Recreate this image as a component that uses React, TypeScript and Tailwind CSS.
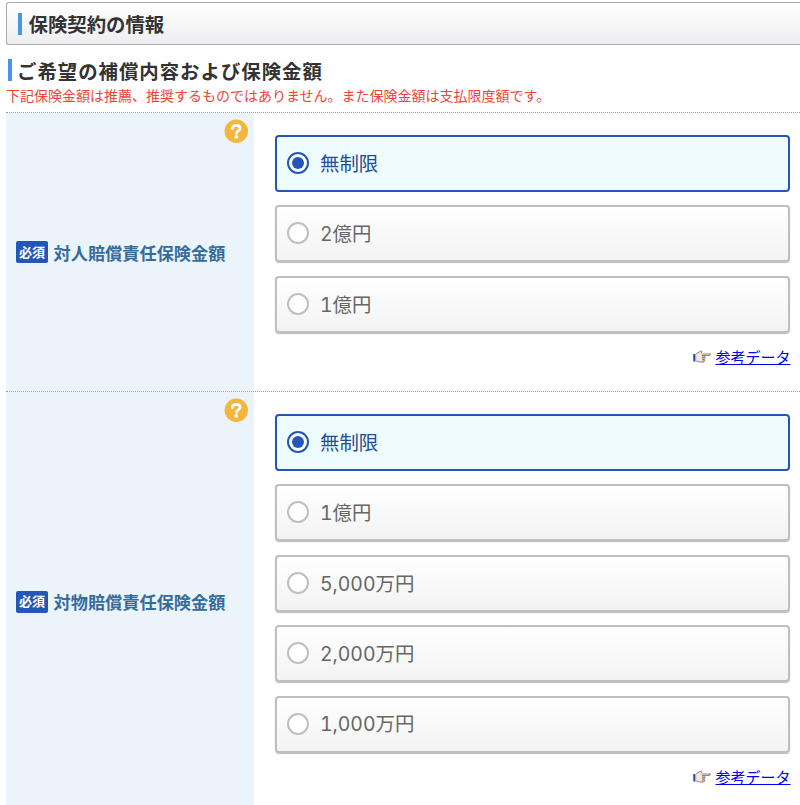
import React from 'react';

const groups = [
  {
    label: '対人賠償責任保険金額',
    options: ['無制限', '2億円', '1億円'],
    height: 'h-[279px]',
  },
  {
    label: '対物賠償責任保険金額',
    options: ['無制限', '1億円', '5,000万円', '2,000万円', '1,000万円'],
    height: 'h-[420px]',
  },
];

function HelpIcon() {
  return (
    <svg className="absolute top-[6px] right-[6px]" width="24" height="24" viewBox="0 0 24 24" fill="none">
      <circle cx="12.3" cy="12.2" r="11.7" fill="#f6b53c" />
      <path d="M8.3 9.6C8.5 7.6 10 6.3 12.2 6.3c2.3 0 4 1.2 4 3.1 0 2.4-3.8 2.4-3.8 4.9" stroke="#fff" strokeWidth="2.7" strokeLinecap="round" />
      <circle cx="12.3" cy="17.9" r="1.9" fill="#fff" />
    </svg>
  );
}

function HandIcon() {
  return (
    <svg className="-mt-px" width="18" height="14" viewBox="0 0 18 14" fill="none">
      <path d="M3.3 3.8 7.5 1.3c.9-.5 1.8 0 1.3.9L8 3.4h8.4c1.2 0 1.2 2 0 2h-4.2c.9.5.8 1.8-.1 2 .6.6.4 1.7-.5 1.9.3 1.4-.2 2.6-1.1 2.6H6.2L3.3 11z" fill="#fbe7d3" />
      <path d="M3.3 3.7 7.5 1.2c.9-.5 1.8 0 1.3.9L8 3.3" stroke="#8b8580" />
      <path d="M8.5 3.2h7.9c1.5 0 1.5 2.2 0 2.2h-4.2c.9.5.8 1.8-.1 2 .6.6.4 1.7-.5 1.9.3 1.4-.2 2.6-1.1 2.6H9.2z" fill="#c3b9ae" />
      <path d="M9.2 5.4h7.2c1.3 0 1.3-2.1 0-2.1M9.4 7.4h2.7M9.4 9.4h2.2M3.3 11l2.9 1h4.3c.9 0 1.4-1.2 1.1-2.6" stroke="#827b76" strokeWidth="0.9" />
      <path d="M.3 4h2.2v7.5H.3z" fill="#25479b" />
      <path d="M2.5 3.8h.9v7.4h-.9z" fill="#aebfda" />
    </svg>
  );
}

function Option({ text, checked }: { text: string; checked: boolean }) {
  return (
    <label
      className={
        checked
          ? 'flex h-[57px] items-center rounded-[4px] border-2 border-[#2456b8] bg-[#effcff] pb-px pl-[9.5px] text-[#234c94]'
          : 'flex h-[57px] items-center rounded-[4px] border-2 border-[#bfbfbf] bg-linear-to-b from-white to-[#f3f3f3] pb-px pl-[9.5px] text-[#666] shadow-[0_1px_1px_#bbb]'
      }
    >
      <span
        className={
          checked
            ? 'flex size-[22px] items-center justify-center rounded-full border-2 border-[#2456b8] bg-white'
            : 'size-[22px] rounded-full border-2 border-[#bfbfbf] bg-white'
        }
      >
        {checked && <span className="size-[12px] rounded-full bg-[#2456b8]" />}
      </span>
      <span className="ml-[11.5px] pt-[3px] text-[19.4px] leading-none tabular-nums">{text}</span>
    </label>
  );
}

export default function App() {
  return (
    <div className="h-[805px] overflow-hidden bg-white pl-[6px] pt-[2px] font-[Inter,'Noto_Sans_CJK_JP',sans-serif]">
      {/* Page title */}
      <div className="flex h-[43px] items-center rounded-l-[3px] border border-r-0 border-[#a9a9ad] bg-linear-to-b from-white to-[#eeeef1] pl-[11px]">
        <span className="h-[22px] w-[3.5px] bg-[#4596ec]" />
        <h1 className="ml-[7px] pt-[5px] text-[19.4px] leading-none font-bold text-[#333]">保険契約の情報</h1>
      </div>

      {/* Section heading */}
      <div className="mt-[14px] flex h-[22px] items-center pl-[2px]">
        <span className="h-[22px] w-[3.5px] bg-[#4596ec]" />
        <h2 className="ml-[5.5px] pt-[5px] text-[19.4px] leading-none font-bold tracking-[1px] text-[#333]">
          ご希望の補償内容および保険金額
        </h2>
      </div>
      <p className="mt-[5px] h-[26px] text-[14px] leading-[19px] whitespace-nowrap text-[#ee4438]">
        下記保険金額は推薦、推奨するものではありません。また保険金額は支払限度額です。
      </p>

      {/* Coverage rows */}
      {groups.map((g) => (
        <div key={g.label} className={`flex border-t border-dotted border-[#999] ${g.height}`}>
          <div className="relative flex w-[248px] shrink-0 items-center bg-[#ebf3fb] pl-[10px]">
            <HelpIcon />
            <span className="flex h-[22px] w-[32px] items-center justify-center rounded-[2px] bg-[#2456b8] text-[13px] leading-none font-bold text-white">
              必須
            </span>
            <span className="ml-[5.5px] pt-[3px] text-[17.2px] leading-none font-bold text-[#356c9b]">{g.label}</span>
          </div>
          <div className="flex-1 pt-[22px] pr-[9.5px] pl-[21px]">
            <div className="mr-[0.5px] flex flex-col gap-[13.4px]">
              {g.options.map((o, i) => (
                <Option key={o} text={o} checked={i === 0} />
              ))}
            </div>
            <div className="mt-[14px] flex items-center justify-end gap-[4px]">
              <HandIcon />
              <a href="#" className="text-[15px] leading-[22px] text-[#0000ee] underline">
                参考データ
              </a>
            </div>
          </div>
        </div>
      ))}
    </div>
  );
}
